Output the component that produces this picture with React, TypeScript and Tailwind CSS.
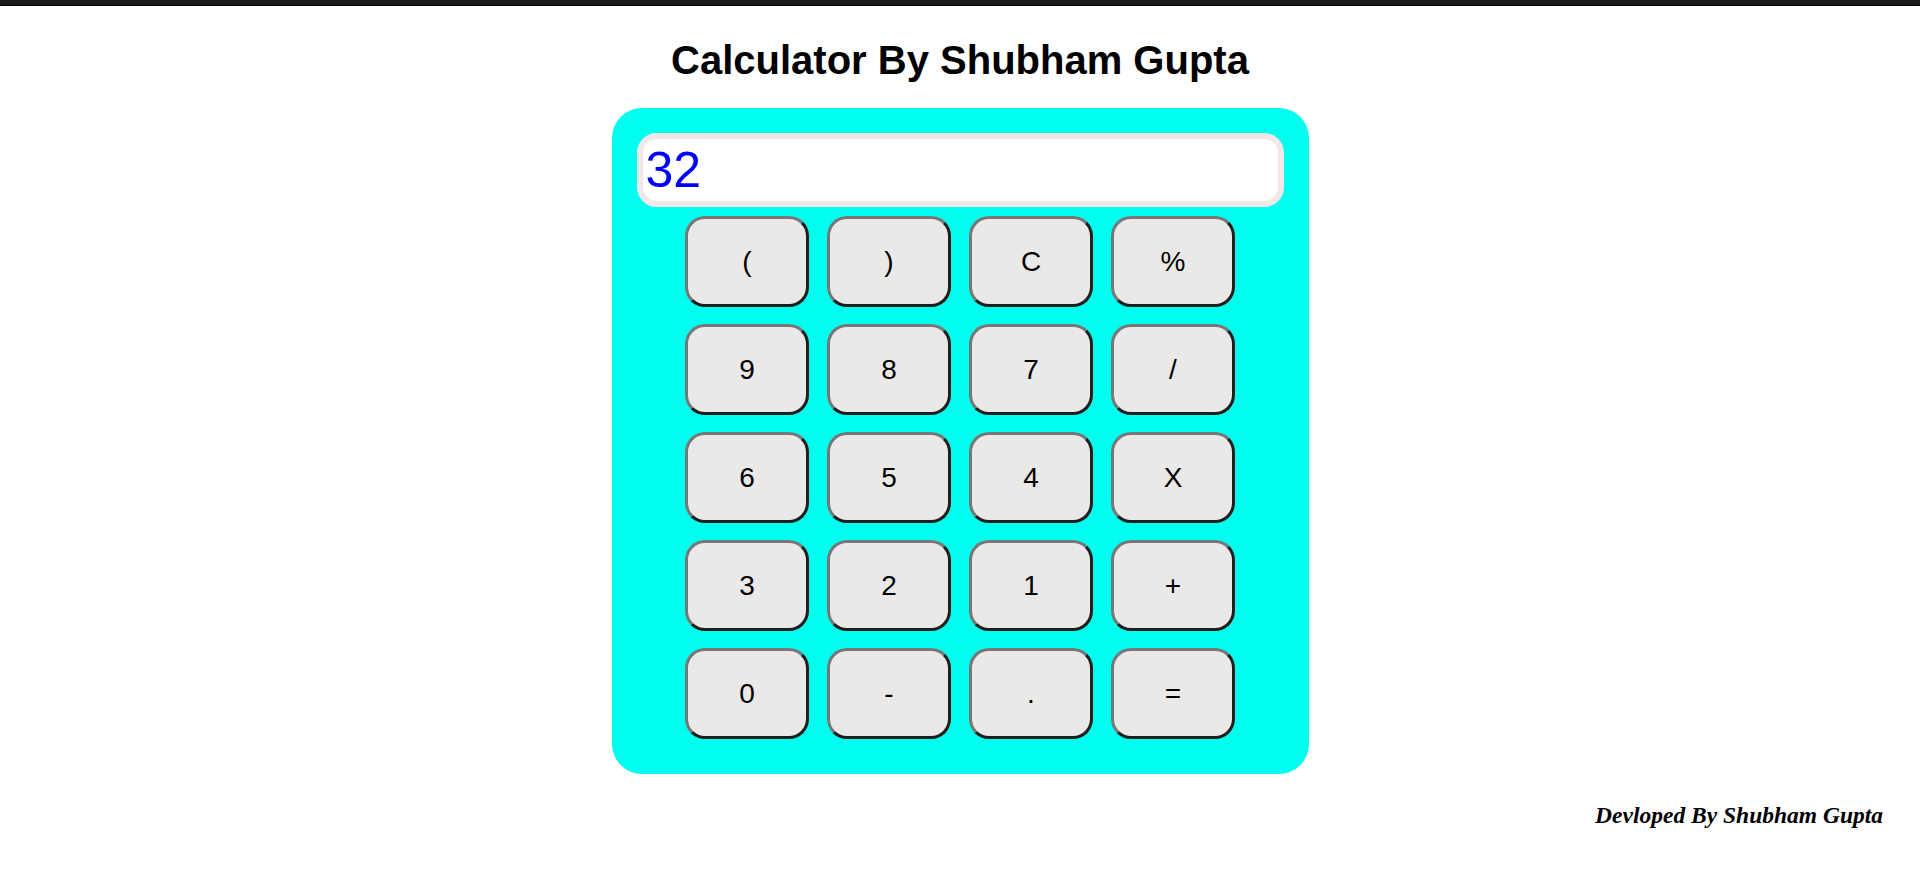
import React from "react";

const rows: string[][] = [
  ["(", ")", "C", "%"],
  ["9", "8", "7", "/"],
  ["6", "5", "4", "X"],
  ["3", "2", "1", "+"],
  ["0", "-", ".", "="],
];

export default function App() {
  return (
    <div className="min-h-[886px] w-full bg-white font-['Liberation_Sans',Arial,sans-serif] text-black">
      <div className="h-[6px] w-full bg-[#1a1c1e] border-b border-black" />
      <h1 className="mt-[31px] text-center text-[40px] font-bold leading-[46px]">
        Calculator By Shubham Gupta
      </h1>
      <div className="mx-auto mt-[25px] flex h-[666px] w-[697px] flex-col items-center rounded-[30px] bg-[#00ffef] px-[25px] pt-[25px]">
        <div className="flex h-[74px] w-[647px] items-center rounded-[20px] border-[6px] border-[#f5e7e8] bg-white pl-[3px] text-[50px] leading-[57px] text-[#0000ff]">
          32
        </div>
        <div className="mt-[9px] grid grid-cols-[repeat(4,124px)] gap-x-[18px] gap-y-[17px]">
          {rows.flat().map((k, i) => (
            <button
              key={i}
              className="flex h-[91px] w-[124px] items-center justify-center rounded-[20px] border-[3px] border-t-[#777777] border-l-[#777777] border-b-[#1e1e1e] border-r-[#1e1e1e] bg-[#eae9e7] text-[28px] text-black"
            >
              {k}
            </button>
          ))}
        </div>
      </div>
      <div className="mt-[28px] flex justify-end pr-[37px]">
        <span className="font-['Liberation_Serif','Times_New_Roman',serif] text-[23.5px] font-bold italic leading-[26px]">
          Devloped By Shubham Gupta
        </span>
      </div>
    </div>
  );
}
